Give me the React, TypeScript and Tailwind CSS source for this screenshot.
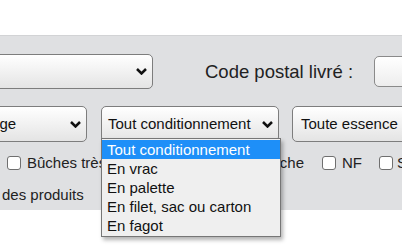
import React from 'react';

function Chevron() {
  return (
    <svg width="11" height="7" viewBox="0 0 11 7" className="shrink-0">
      <polyline points="1,1 5.5,5.5 10,1" fill="none" stroke="#111" strokeWidth="2.5" />
    </svg>
  );
}

function Select({ label, className, children }: { label?: string; className: string; children?: React.ReactNode }) {
  return (
    <div
      className={`relative shrink-0 flex items-center justify-between pl-[6px] pr-[5px] rounded-[5px] border border-[#7d7d7d] bg-gradient-to-b from-white to-[#e4e4e4] text-[15px] text-[#111] whitespace-nowrap ${className}`}
    >
      <span>{label}</span>
      <Chevron />
      {children}
    </div>
  );
}

function Box({ className = '' }: { className?: string }) {
  return <span className={`shrink-0 w-[14px] h-[14px] rounded-[3px] border border-[#6f6f6f] bg-white ${className}`} />;
}

const options = ['Tout conditionnement', 'En vrac', 'En palette', 'En filet, sac ou carton', 'En fagot'];

export default function App() {
  return (
    <div className="w-[402px] h-[248px] overflow-hidden bg-white font-['Liberation_Sans',Arial,sans-serif]">
      <div className="h-[35px]" />
      <div className="h-[175px] bg-[#dfe0e2] border-t border-[#d2d3d5] pt-[18px]">
        <div className="flex items-center h-[35px] whitespace-nowrap">
          <Select className="ml-[-100px] w-[253px] h-[35px]" />
          <span className="shrink-0 ml-[52px] text-[18.5px] text-[#222]">Code postal livré :</span>
          <div className="shrink-0 ml-[21px] w-[80px] h-[31px] rounded-[5px] border border-[#8a8a8a] bg-gradient-to-b from-white to-[#ededed]" />
        </div>

        <div className="flex items-center h-[36px] mt-[17px]">
          <Select label="Tout chauffage" className="ml-[-89px] w-[176px] h-[36px]" />
          <Select label="Tout conditionnement" className="ml-[14px] w-[178px] h-[36px]">
            <div className="absolute left-[-1px] top-[31px] w-[180px] z-10 border border-[#767676] bg-[#efefef] py-[1px] shadow-[2px_3px_4px_rgba(0,0,0,0.3)]">
              {options.map((o, i) => (
                <div
                  key={o}
                  className={`h-[19px] leading-[19px] pl-[5px] text-[15px] ${i === 0 ? 'bg-[#1e8ff8] text-white' : 'text-[#111]'}`}
                >
                  {o}
                </div>
              ))}
            </div>
          </Select>
          <Select label="Toute essence" className="ml-[13px] w-[150px] h-[36px] pl-[8px]" />
        </div>

        <div className="flex items-center h-[18px] mt-[12px] text-[15px] text-[#222] whitespace-nowrap">
          <Box className="ml-[7px]" />
          <span className="ml-[6px]">Bûches très sèches</span>
          <Box className="ml-[31px]" />
          <span className="ml-[6px]">Bois de bûche</span>
          <Box className="ml-[18px]" />
          <span className="ml-[6px]">NF</span>
          <Box className="ml-[17px]" />
          <span className="ml-[4px]">Sec</span>
        </div>

        <div className="mt-[14px] h-[18px] leading-[18px] pl-[2px] text-[15px] text-[#222]">des produits</div>
      </div>
    </div>
  );
}
